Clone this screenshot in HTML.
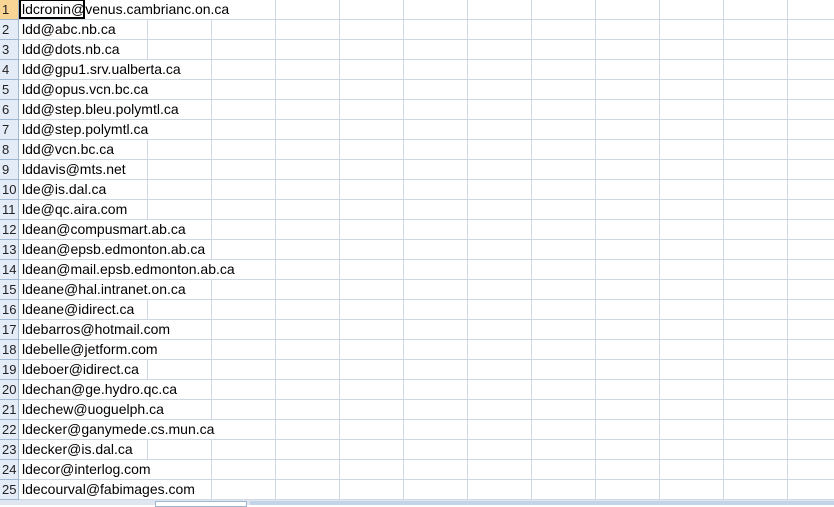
<!DOCTYPE html>
<html><head><style>
body{margin:0;width:834px;height:505px;overflow:hidden;background:#fff;position:relative;font-family:"Liberation Sans",sans-serif;}
.v{position:absolute;top:0;width:1px;height:502px;background:#d0d7e5;}
.h{position:absolute;left:0;width:834px;height:1px;background:#d0d7e5;}
.rh{position:absolute;left:0;height:19px;background:#e4ecf7;border-right:1px solid #9eb6ce;border-bottom:1px solid #9eb6ce;color:#222;font-size:13px;line-height:19px;padding-left:2px;box-sizing:border-box;width:19px;}
.t{position:absolute;left:20px;height:19px;background:#fff;font-size:14px;line-height:19px;padding-left:2px;color:#000;white-space:nowrap;letter-spacing:0px;}
</style></head><body>
<div id="g"></div>
<div style="position:absolute;left:0;top:500px;width:834px;height:5px;background:#dfe6ef;"></div>
<div style="position:absolute;left:155px;top:501px;width:90px;height:4px;background:#fff;border:1px solid #9eb6ce;"></div>
<div style="position:absolute;left:250px;top:501px;width:584px;height:4px;background:#c3d3e8;"></div>
<script>
var emails=["ldcronin@venus.cambrianc.on.ca","ldd@abc.nb.ca","ldd@dots.nb.ca","ldd@gpu1.srv.ualberta.ca","ldd@opus.vcn.bc.ca","ldd@step.bleu.polymtl.ca","ldd@step.polymtl.ca","ldd@vcn.bc.ca","lddavis@mts.net","lde@is.dal.ca","lde@qc.aira.com","ldean@compusmart.ab.ca","ldean@epsb.edmonton.ab.ca","ldean@mail.epsb.edmonton.ab.ca","ldeane@hal.intranet.on.ca","ldeane@idirect.ca","ldebarros@hotmail.com","ldebelle@jetform.com","ldeboer@idirect.ca","ldechan@ge.hydro.qc.ca","ldechew@uoguelph.ca","ldecker@ganymede.cs.mun.ca","ldecker@is.dal.ca","ldecor@interlog.com","ldecourval@fabimages.com"];
var cols=[84,147,211,275,339,403,467,531,595,659,723,787];
var h='';
cols.forEach(function(x){h+='<div class="v" style="left:'+x+'px"></div>';});
for(var i=0;i<25;i++){var y=i*20;
h+='<div class="h" style="top:'+(y+19)+'px"></div>';
h+='<div class="rh" style="top:'+y+'px;height:20px;'+(i==0?'background:#f8d594;':'')+'">'+(i+1)+'</div>';
h+='<span class="t" id="t'+i+'" style="top:'+y+'px">'+emails[i]+'</span>';}
h+='<div style="position:absolute;left:19px;top:0;width:66px;height:19px;border:2px solid #000;border-top-width:1px;box-sizing:border-box;"></div>';
document.getElementById('g').innerHTML=h;
for(var i=0;i<25;i++){var s=document.getElementById('t'+i);var r=20+s.offsetWidth;var e=cols[0];for(var k=0;k<cols.length;k++){if(cols[k]>=r){e=cols[k];break;}}s.style.width=(e-20-2)+'px';}
</script>
</body></html>
